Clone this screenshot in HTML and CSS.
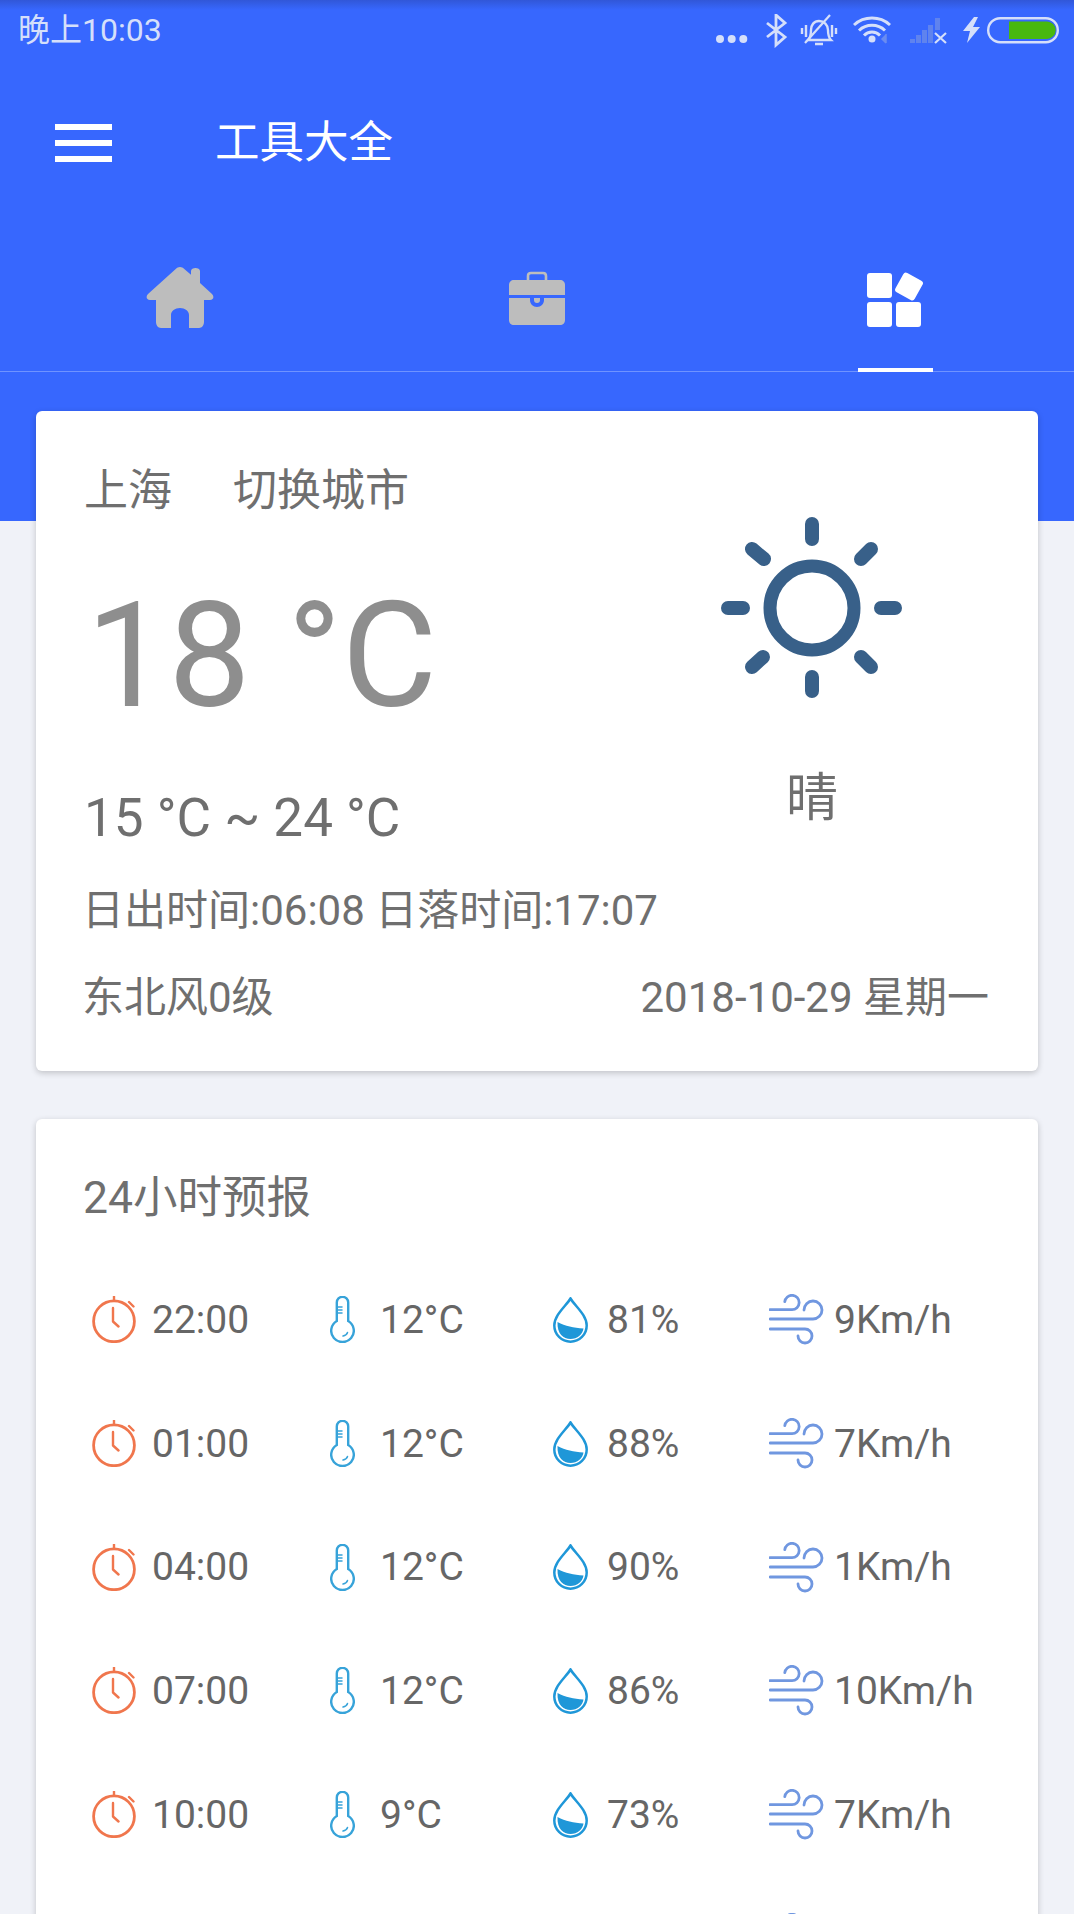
FILE: index.html
```html
<!DOCTYPE html>
<html lang="zh">
<head>
<meta charset="utf-8">
<title>工具大全</title>
<link rel="stylesheet" href="styles.css">
</head>
<body>
<svg class="defs" width="0" height="0" aria-hidden="true">
  <symbol id="clock" viewBox="0 0 44 47">
    <circle cx="22" cy="25.3" r="20.4" fill="none" stroke="#f0764d" stroke-width="2.800"/>
    <path d="M22 0.500V4M37 6l4.500 4.500M21 12v13.500l5.500 5" fill="none" stroke="#f0764d" stroke-width="2.400" stroke-linecap="round" stroke-linejoin="round"/>
  </symbol>
  <symbol id="thermo" viewBox="0 0 25 47">
    <path d="M6.800 25V6.500a5.700 5.700 0 0 1 11.400 0V25a11.300 11.300 0 1 1-11.400 0Z" fill="none" stroke="#37a3d9" stroke-width="2.400"/>
    <path d="M7 11h5M7 14h5M7 17h5M13 40c2.500-.5 4-1.800 4.500-3.500" fill="none" stroke="#37a3d9" stroke-width="1.500" stroke-linecap="round"/>
  </symbol>
  <symbol id="drop" viewBox="0 0 35 46">
    <path d="M17.500 1.500C13 9 1.300 18 1.300 28.500a16.200 16.200 0 0 0 32.400 0C33.700 18 22 9 17.500 1.500Z" fill="none" stroke="#1f97d8" stroke-width="2.500"/>
    <path d="M4.500 25c8 4 16 6 26 6.500-1 6-6 10.500-13 10.500S4 37 4.500 25Z" fill="#1f97d8"/>
  </symbol>
  <symbol id="wind" viewBox="0 0 56 51">
    <path d="M1 15.700H23a7.200 7.200 0 1 0-7.200-8M1 25H44a9 9 0 1 0-9-9M1 35H36a7 7 0 1 1-7 7" fill="none" stroke="#7097e0" stroke-width="2.800" stroke-linecap="round"/>
  </symbol>
</svg>

<div class="page">
  <header class="hero">
    <div class="status">
      <span class="status-time">晚上10:03</span>
      <svg class="status-icons" width="352" height="34" viewBox="0 0 352 34" aria-hidden="true">
        <g fill="#d5dffa"><circle cx="5" cy="25" r="4"/><circle cx="16.700" cy="25" r="4"/><circle cx="28.300" cy="25" r="4"/></g>
        <path d="M52 9l18 14-9 8V1l9 8-18 14" fill="none" stroke="#d5dffa" stroke-width="2.800"/>
        <g fill="none" stroke="#d5dffa" stroke-width="2.400">
          <path d="M93 26c3-3 3-6 3-10 0-5 3-9 8-9s9 4 9 9c0 4 0 7 3 10ZM100 30h8M91 11v12M117 11v12M87 14v6M121 14v6"/>
          <path d="M90 29l25-28" stroke-width="2.200"/>
        </g>
        <g fill="none" stroke="#d5dffa" stroke-width="3">
          <path d="M139 11a27 27 0 0 1 36 0M144 16.500a19 19 0 0 1 26 0M149 21.500a11 11 0 0 1 16 0"/>
        </g>
        <circle cx="157" cy="25" r="3.500" fill="#d5dffa"/>
        <path d="M171 20v9M167 25l3-3v6Z" stroke="#6b8cf0" stroke-width="1.500" fill="#6b8cf0"/>
        <g fill="#5f83ee"><rect x="195" y="25" width="5" height="4"/><rect x="201" y="21" width="5" height="8"/><rect x="207" y="16" width="5" height="13"/><rect x="213" y="11" width="5" height="18"/><rect x="220" y="4" width="5" height="12"/></g>
        <path d="M220 19l11 10M231 19l-11 10" stroke="#d5dffa" stroke-width="2.200"/>
        <path d="M259 3l-11 14h7l-3 12 13-16h-7l5-10Z" fill="#d5dffa"/>
        <rect x="273.200" y="4.200" width="69.600" height="24" rx="12" fill="none" stroke="#d5dffa" stroke-width="2.400"/>
        <path d="M294 7.500H332a8.700 8.700 0 0 1 0 17.400H294Z" fill="#48b80f"/>
      </svg>
    </div>
    <div class="appbar">
      <span class="menu"><i></i><i></i><i></i></span>
      <h1 class="app-title">工具大全</h1>
    </div>
    <nav class="tabs">
      <div class="tab">
        <svg width="68" height="62" viewBox="0 0 68 62" aria-hidden="true"><path fill="#bdbdbd" d="M34 1c1.600 0 3 .8 4 1.800l7 6V5c0-4 9-4 9 0v12l12 11c2.500 2.500 1.500 6-2 6H58v22c0 3-2 6-5 6H43V49c0-4-4-7-9-7s-9 3-9 7v13H15c-3 0-5-3-5-6V34H4c-3.500 0-4.500-3.500-2-6L30 2.800C31 1.800 32.400 1 34 1Z"/></svg>
      </div>
      <div class="tab">
        <svg width="56" height="62" viewBox="0 0 56 62" aria-hidden="true"><g transform="translate(0 6)" fill="#bdbdbd"><path d="M19 8V4c0-2 1-3 3-3h12c2 0 3 1 3 3v4" fill="none" stroke="#bdbdbd" stroke-width="2.600"/><path d="M5 8H51c3 0 5 2 5 5V23H0V13c0-3 2-5 5-5Z"/><path d="M0 26H21V28c0 4 3 7 7 7s7-3 7-7V26H56V48c0 3-2 5-5 5H5c-3 0-5-2-5-5Z"/><path d="M25 26h6v2c0 2-1 3-3 3s-3-1-3-3Z"/></g></svg>
      </div>
      <div class="tab">
        <svg class="apps" width="56" height="62" viewBox="0 0 56 62" aria-hidden="true"><g transform="translate(0 6)" fill="#fff"><rect x="0" y="1" width="25" height="25" rx="3"/><rect x="0" y="30" width="25" height="25" rx="3"/><rect x="29" y="30" width="25" height="25" rx="3"/><rect x="31" y="3.500" width="22" height="22" rx="3" transform="rotate(29 42 14.500)"/></g></svg>
        <span class="tab-line"></span>
      </div>
    </nav>
  </header>

  <main class="content">
    <section class="card today">
      <div class="today-left">
        <div class="city"><span>上海</span><span>切换城市</span></div>
        <div class="temp">18 °C</div>
        <div class="range">15 °C ~ 24 °C</div>
      </div>
      <div class="today-right">
        <svg width="182" height="182" viewBox="0 0 182 182" aria-hidden="true">
          <circle cx="91" cy="91" r="42" fill="none" stroke="#386089" stroke-width="13"/>
          <path d="M91 7v15M91 160v14M7 91h15M160 91h14M31 32l12 10M150 32l-10 10M31 150l11-10M150 150l-10-10" fill="none" stroke="#386089" stroke-width="14" stroke-linecap="round"/>
        </svg>
        <div class="weather">晴</div>
      </div>
      <div class="sun">日出时间:06:08 日落时间:17:07</div>
      <div class="foot"><span>东北风0级</span><span>2018-10-29 星期一</span></div>
    </section>

    <section class="card forecast">
      <h2 class="forecast-title">24小时预报</h2>
      <div class="rows">
        <div class="row">
          <span class="cell"><svg class="i-clock"><use href="#clock"/></svg>22:00</span>
          <span class="cell"><svg class="i-thermo"><use href="#thermo"/></svg>12°C</span>
          <span class="cell"><svg class="i-drop"><use href="#drop"/></svg>81%</span>
          <span class="cell"><svg class="i-wind"><use href="#wind"/></svg>9Km/h</span>
        </div>
        <div class="row">
          <span class="cell"><svg class="i-clock"><use href="#clock"/></svg>01:00</span>
          <span class="cell"><svg class="i-thermo"><use href="#thermo"/></svg>12°C</span>
          <span class="cell"><svg class="i-drop"><use href="#drop"/></svg>88%</span>
          <span class="cell"><svg class="i-wind"><use href="#wind"/></svg>7Km/h</span>
        </div>
        <div class="row">
          <span class="cell"><svg class="i-clock"><use href="#clock"/></svg>04:00</span>
          <span class="cell"><svg class="i-thermo"><use href="#thermo"/></svg>12°C</span>
          <span class="cell"><svg class="i-drop"><use href="#drop"/></svg>90%</span>
          <span class="cell"><svg class="i-wind"><use href="#wind"/></svg>1Km/h</span>
        </div>
        <div class="row">
          <span class="cell"><svg class="i-clock"><use href="#clock"/></svg>07:00</span>
          <span class="cell"><svg class="i-thermo"><use href="#thermo"/></svg>12°C</span>
          <span class="cell"><svg class="i-drop"><use href="#drop"/></svg>86%</span>
          <span class="cell"><svg class="i-wind"><use href="#wind"/></svg>10Km/h</span>
        </div>
        <div class="row">
          <span class="cell"><svg class="i-clock"><use href="#clock"/></svg>10:00</span>
          <span class="cell"><svg class="i-thermo"><use href="#thermo"/></svg>9°C</span>
          <span class="cell"><svg class="i-drop"><use href="#drop"/></svg>73%</span>
          <span class="cell"><svg class="i-wind"><use href="#wind"/></svg>7Km/h</span>
        </div>
        <div class="row">
          <span class="cell"></span>
          <span class="cell"><svg class="i-thermo"><use href="#thermo"/></svg></span>
          <span class="cell"><svg class="i-drop"><use href="#drop"/></svg></span>
          <span class="cell"><svg class="i-wind"><use href="#wind"/></svg></span>
        </div>
      </div>
    </section>
  </main>
</div>
</body>
</html>
```

FILE: styles.css
```css
* { box-sizing: border-box; }
html, body { margin: 0; padding: 0; }
body {
  width: 1074px;
  height: 1914px;
  overflow: hidden;
  background: #f0f2f8;
  font-family: Roboto, "Noto Sans CJK SC", sans-serif;
  color: #666;
}
.defs { position: absolute; }
.page { height: 1914px; overflow: hidden; }

.hero {
  height: 521px;
  background: #3767fe;
}
.status {
  height: 60px;
  padding: 11px 7px 0 18px;
  display: flex;
  justify-content: space-between;
  align-items: flex-start;
  background: linear-gradient(#3157d8 0, #3767fe 10px);
}
.status-time { font-size: 32px; line-height: 38px; color: #d5dffa; }
.status-icons { margin-top: 3px; }

.appbar {
  height: 166px;
  padding-left: 55px;
  display: flex;
  align-items: center;
}
.menu { width: 57px; display: flex; flex-direction: column; gap: 10px; }
.menu i { display: block; height: 6px; background: #fff; }
.app-title {
  margin: 0 0 0 103px;
  font-size: 44.500px;
  line-height: 60px;
  font-weight: 400;
  color: #fff;
}

.tabs {
  height: 146px;
  display: grid;
  grid-template-columns: 360px 354px 360px;
  border-bottom: 1px solid #6f93ff;
}
.tab {
  position: relative;
  display: flex;
  justify-content: center;
  align-items: flex-start;
  padding-top: 40px;
}
.apps { margin-left: 2px; }
.tab-line {
  position: absolute;
  left: 144px;
  top: 142px;
  width: 75px;
  height: 4px;
  background: #fff;
}

.content {
  margin-top: -110px;
  padding: 0 36px;
  display: flex;
  flex-direction: column;
  gap: 48px;
}
.card {
  background: #fff;
  border-radius: 6px;
  box-shadow: 0 2px 6px rgba(0,0,0,.2);
}
.today {
  height: 660px;
  padding: 0 49px 0 46px;
  display: grid;
  grid-template-columns: 1fr 260px;
  grid-template-rows: 464px 91px 64px;
}
.today-left { padding-top: 54px; }
.city { font-size: 44px; line-height: 52px; display: flex; gap: 61px; color: #6f6f6f; padding-left: 2px; }
.temp { margin: 57px 0 0 4px; font-size: 146.500px; line-height: 164px; color: #8e8e8e; }
.range { margin: 48px 0 0 2px; font-size: 53px; line-height: 64px; color: #6f6f6f; white-space: nowrap; }
.today-right {
  display: flex;
  flex-direction: column;
  align-items: center;
  padding-top: 106px;
  margin: 0 47px 0 -47px;
}
.weather { margin-top: 66px; font-size: 52px; line-height: 68px; color: #6f6f6f; }
.sun { grid-column: 1 / 3; font-size: 42px; line-height: 70px; color: #6f6f6f; white-space: nowrap; padding-top: 1px; }
.foot {
  grid-column: 1 / 3;
  display: flex;
  justify-content: space-between;
  font-size: 42px;
  line-height: 64px;
  color: #6f6f6f;
}

.forecast { height: 900px; padding: 0 47px; }
.forecast-title {
  margin: 0;
  padding-top: 52px;
  font-size: 44.500px;
  line-height: 54px;
  font-weight: 400;
  color: #6f6f6f;
}
.rows { margin-top: 33px; }
.row {
  height: 123.7px;
  display: grid;
  grid-template-columns: 240px 226px 218px 1fr;
  align-items: center;
}
.cell { display: flex; align-items: center; height: 50px; font-size: 39px; line-height: 48px; color: #666; white-space: nowrap; }
.i-clock { width: 44px; height: 47px; margin: 0 16px 0 9px; flex: none; }
.i-thermo { width: 25px; height: 47px; margin: 0 25px 0 7px; flex: none; }
.i-drop { width: 35px; height: 46px; margin: 0 19px 0 4px; flex: none; }
.i-wind { width: 56px; height: 51px; margin: 0 9px 0 2px; flex: none; }
```
